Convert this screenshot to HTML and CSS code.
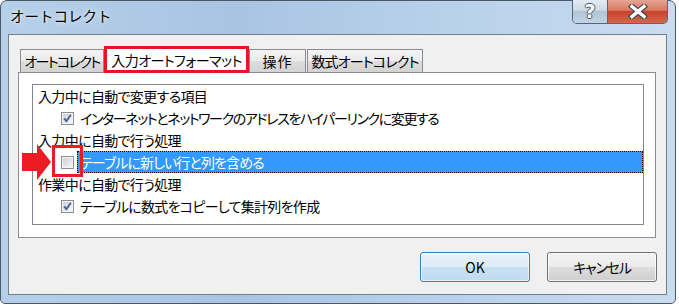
FILE: index.html
```html
<!DOCTYPE html>
<html lang="ja">
<head>
<meta charset="utf-8">
<title>オートコレクト</title>
<link rel="stylesheet" href="styles.css">
</head>
<body>
<div class="window">
  <div class="titlebar">
    <div class="title">オートコレクト</div>
    <div class="caption-buttons">
      <div class="cap help"><span class="qmark">?</span></div>
      <div class="cap close">
        <svg class="xicon" width="20" height="15" viewBox="0 0 20 15">
          <path d="M4 2.5 L16 12.5 M16 2.5 L4 12.5" stroke="#3b4450" stroke-width="5.6" stroke-linecap="square" fill="none"/>
          <path d="M4 2.5 L16 12.5 M16 2.5 L4 12.5" stroke="#ffffff" stroke-width="3.4" stroke-linecap="square" fill="none"/>
        </svg>
      </div>
    </div>
  </div>
  <div class="client">
    <div class="tabs">
      <div class="tab t1">オートコレクト</div>
      <div class="tab active">入力オートフォーマット</div>
      <div class="tab t3">操作</div>
      <div class="tab t4">数式オートコレクト</div>
    </div>
    <div class="panel">
      <div class="listbox">
        <div class="row heading">入力中に自動で変更する項目</div>
        <div class="row item">
          <svg class="cb" width="13" height="13" viewBox="0 0 13 13">
            <defs><linearGradient id="g1" x1="0" y1="0" x2="1" y2="1"><stop offset="0" stop-color="#cbd0d6"/><stop offset="1" stop-color="#f7f7f7"/></linearGradient></defs>
            <rect x="0.5" y="0.5" width="12" height="12" fill="#f4f4f4" stroke="#8e8f8f"/>
            <rect x="2" y="2" width="9" height="9" fill="url(#g1)"/>
            <path d="M3.2 6.4 L5.4 9.2 L9.8 2.8" stroke="#4a5f9c" stroke-width="1.9" fill="none"/>
          </svg>
          <span class="label long">インターネットとネットワークのアドレスをハイパーリンクに変更する</span>
        </div>
        <div class="row heading">入力中に自動で行う処理</div>
        <div class="row item selected">
          <svg class="cb" width="13" height="13" viewBox="0 0 13 13">
            <defs><linearGradient id="g2" x1="0" y1="0" x2="1" y2="1"><stop offset="0" stop-color="#cbd0d6"/><stop offset="1" stop-color="#f7f7f7"/></linearGradient></defs>
            <rect x="0.5" y="0.5" width="12" height="12" fill="#f4f4f4" stroke="#8e8f8f"/>
            <rect x="2" y="2" width="9" height="9" fill="url(#g2)"/>
          </svg>
          <span class="label">テーブルに新しい行と列を含める</span>
        </div>
        <div class="row heading">作業中に自動で行う処理</div>
        <div class="row item">
          <svg class="cb" width="13" height="13" viewBox="0 0 13 13">
            <defs><linearGradient id="g3" x1="0" y1="0" x2="1" y2="1"><stop offset="0" stop-color="#cbd0d6"/><stop offset="1" stop-color="#f7f7f7"/></linearGradient></defs>
            <rect x="0.5" y="0.5" width="12" height="12" fill="#f4f4f4" stroke="#8e8f8f"/>
            <rect x="2" y="2" width="9" height="9" fill="url(#g3)"/>
            <path d="M3.2 6.4 L5.4 9.2 L9.8 2.8" stroke="#4a5f9c" stroke-width="1.9" fill="none"/>
          </svg>
          <span class="label">テーブルに数式をコピーして集計列を作成</span>
        </div>
      </div>
      <svg class="arrow" width="30" height="37" viewBox="0 0 30 37">
        <polygon points="0,9 15,9 15,0 29,18 15,36 15,27 0,27" fill="#ed1c24"/>
      </svg>
      <div class="mark"></div>
    </div>
    <div class="buttons">
      <div class="btn default">OK</div>
      <div class="btn cancel">キャンセル</div>
    </div>
  </div>
</div>
</body>
</html>
```

FILE: styles.css
```css
html, body {
  margin: 0;
  padding: 0;
}

body {
  width: 679px;
  height: 306px;
  overflow: hidden;
  background: #ffffff;
  font-family: "Noto Sans CJK JP", "Noto Sans", sans-serif;
  color: #000;
}

.window {
  box-sizing: border-box;
  width: 676px;
  height: 304px;
  border: 1px solid #4a5766;
  border-radius: 7px 7px 5px 5px;
  background: linear-gradient(90deg, #b6cfe9 0%, #a9c4e2 35%, #b8d0ea 65%, #c9dcf0 100%);
  padding: 0 8px 8px 7px;
  display: flex;
  flex-direction: column;
}

.titlebar {
  height: 33px;
  flex: none;
  display: flex;
  justify-content: space-between;
  align-items: flex-start;
}

.title {
  padding: 6px 0 0 2px;
  font-size: 14.5px;
  line-height: 18px;
  text-shadow: 0 0 6px #e8f1fa, 0 0 3px #e8f1fa;
}

.caption-buttons {
  display: flex;
  margin: -1px -1px 0 0;
  height: 24px;
  box-sizing: border-box;
  border: 1px solid #55667a;
  border-top: none;
  border-radius: 0 0 5px 5px;
  overflow: hidden;
}

.cap {
  display: flex;
  align-items: center;
  justify-content: center;
}

.help {
  width: 35px;
  box-sizing: border-box;
  border-right: 1px solid #55667a;
  background: linear-gradient(#e3ebf3, #cdd9e5 45%, #b3c4d6 50%, #c3d3e3);
}

.qmark {
  font-family: "DejaVu Sans", sans-serif;
  font-weight: bold;
  font-size: 19px;
  line-height: 19px;
  color: #ffffff;
  text-shadow: 1px 0 0 #4a5766, -1px 0 0 #4a5766, 0 1px 0 #4a5766, 0 -1px 0 #4a5766;
}

.close {
  width: 59px;
  background: linear-gradient(#e7a596, #d9775f 45%, #c6432b 50%, #d4684b);
}

.xicon {
  display: block;
}

.client {
  box-sizing: border-box;
  width: 659px;
  height: 261px;
  flex: none;
  border: 1px solid #737e8c;
  background: #f0f0f0;
  display: flex;
  flex-direction: column;
}

.tabs {
  display: flex;
  align-items: flex-end;
  height: 23px;
  margin: 14px 0 0 11px;
  flex: none;
}

.tab {
  box-sizing: border-box;
  height: 23px;
  border: 1px solid #898c95;
  border-bottom: none;
  background: linear-gradient(#f3f3f3, #ebebeb 50%, #dddddd 50%, #d3d3d3);
  font-size: 14px;
  font-feature-settings: "palt";
  display: flex;
  align-items: center;
  justify-content: center;
  white-space: nowrap;
}

.t1 {
  width: 84px;
  letter-spacing: -1.6px;
}

.active {
  width: 145px;
  height: 27px;
  margin-bottom: -1px;
  border: 3px solid #e8171f;
  background: #ffffff;
  position: relative;
  z-index: 2;
  letter-spacing: -0.5px;
}

.t3 {
  width: 57px;
  letter-spacing: 1px;
}

.t4 {
  width: 116px;
  margin-left: 1px;
  letter-spacing: -0.8px;
}

.panel {
  position: relative;
  z-index: 1;
  box-sizing: border-box;
  width: 638px;
  height: 166px;
  margin-left: 9px;
  border: 1px solid #898c95;
  background: #ffffff;
  padding: 11px 0 0 13px;
  flex: none;
}

.listbox {
  box-sizing: border-box;
  width: 612px;
  height: 141px;
  border: 1px solid #828790;
  background: #ffffff;
}

.row {
  height: 22px;
  display: flex;
  align-items: center;
  font-size: 14px;
  font-feature-settings: "palt";
  line-height: 20px;
  white-space: nowrap;
}

.heading {
  padding-left: 5px;
  letter-spacing: -0.65px;
}

.item {
  padding-left: 28px;
}

.cb {
  flex: none;
  display: block;
  margin-right: 3px;
}

.label {
  box-sizing: border-box;
  height: 22px;
  padding: 0 3px 0 2px;
  display: flex;
  align-items: center;
  border: 1px solid transparent;
  letter-spacing: -0.7px;
}

.label.long {
  letter-spacing: -1.4px;
}

.selected .label {
  flex: 1;
  background: #3399ff;
  color: #ffffff;
  border-color: #f08c18;
  outline: 1px dotted #000000;
  outline-offset: -1px;
  letter-spacing: -0.9px;
}

.arrow {
  position: absolute;
  left: 3px;
  top: 71px;
}

.mark {
  position: absolute;
  left: 33px;
  top: 72px;
  width: 31px;
  height: 32px;
  box-sizing: border-box;
  border: 3px solid #ed1c24;
}

.buttons {
  display: flex;
  justify-content: flex-end;
  gap: 17px;
  margin: 14px 9px 0 0;
}

.btn {
  box-sizing: border-box;
  width: 110px;
  height: 30px;
  border: 1px solid #707070;
  border-radius: 3px;
  background: linear-gradient(#f2f2f2, #ebebeb 50%, #dddddd 50%, #cfcfcf);
  box-shadow: inset 0 0 0 1px rgba(255, 255, 255, 0.75);
  display: flex;
  align-items: center;
  justify-content: center;
  font-size: 14px;
  font-feature-settings: "palt";
}

.cancel {
  letter-spacing: -1.2px;
}

.default {
  border-color: #3c7fb1;
  background: linear-gradient(#e9f3fb, #dcebf7 50%, #c9e0f2 50%, #c2dbef);
  box-shadow: inset 0 0 0 1px rgba(255, 255, 255, 0.6);
}
```
